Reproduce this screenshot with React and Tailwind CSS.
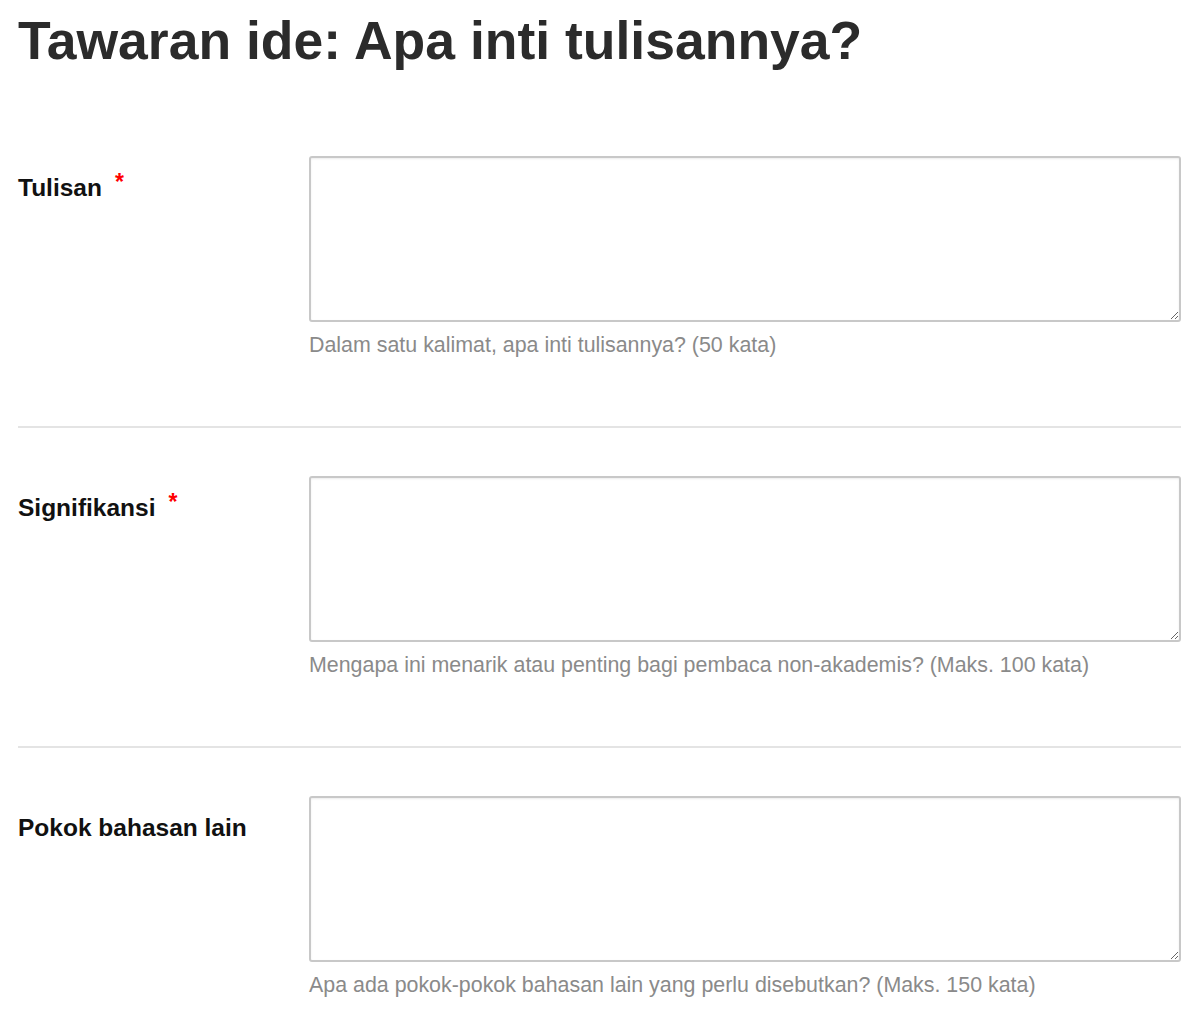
import React from 'react';

const fields = [
  { label: 'Tulisan', required: true, help: 'Dalam satu kalimat, apa inti tulisannya? (50 kata)' },
  { label: 'Signifikansi', required: true, help: 'Mengapa ini menarik atau penting bagi pembaca non-akademis? (Maks. 100 kata)' },
  { label: 'Pokok bahasan lain', required: false, help: 'Apa ada pokok-pokok bahasan lain yang perlu disebutkan? (Maks. 150 kata)' },
];

export default function App() {
  return (
    <div className="min-h-[1024px] bg-white px-[18px] pt-[10px] font-['Liberation_Sans',Arial,sans-serif]">
      <h1 className="text-[53.5px] font-bold leading-[62px] text-[#2b2b2b]">Tawaran ide: Apa inti tulisannya?</h1>

      <div className="mt-[84px] w-[1163px]">
        {fields.map((f, i) => (
          <div key={f.label}>
            {i > 0 && <div className="mt-[68px] mb-[48px] h-[2px] bg-[#e4e4e4]" />}
            <div className="flex">
              <div className="w-[291px] shrink-0 pt-[14px]">
                <span className="text-[24.5px] font-bold text-[#111]">{f.label}</span>
                {f.required && <span className="relative -top-[6px] ml-[13px] text-[23px] font-bold text-[#ff0000]">*</span>}
              </div>
              <div className="flex-1">
                <textarea className="block h-[166px] w-full resize-y rounded-[3px] border-2 border-[#c8c8c8] bg-white shadow-[inset_0_1px_2px_rgba(0,0,0,0.08)] outline-none" />
                <p className="mt-[11px] text-[21.4px] leading-[25px] text-[#8a8a8a]">{f.help}</p>
              </div>
            </div>
          </div>
        ))}
      </div>
    </div>
  );
}
